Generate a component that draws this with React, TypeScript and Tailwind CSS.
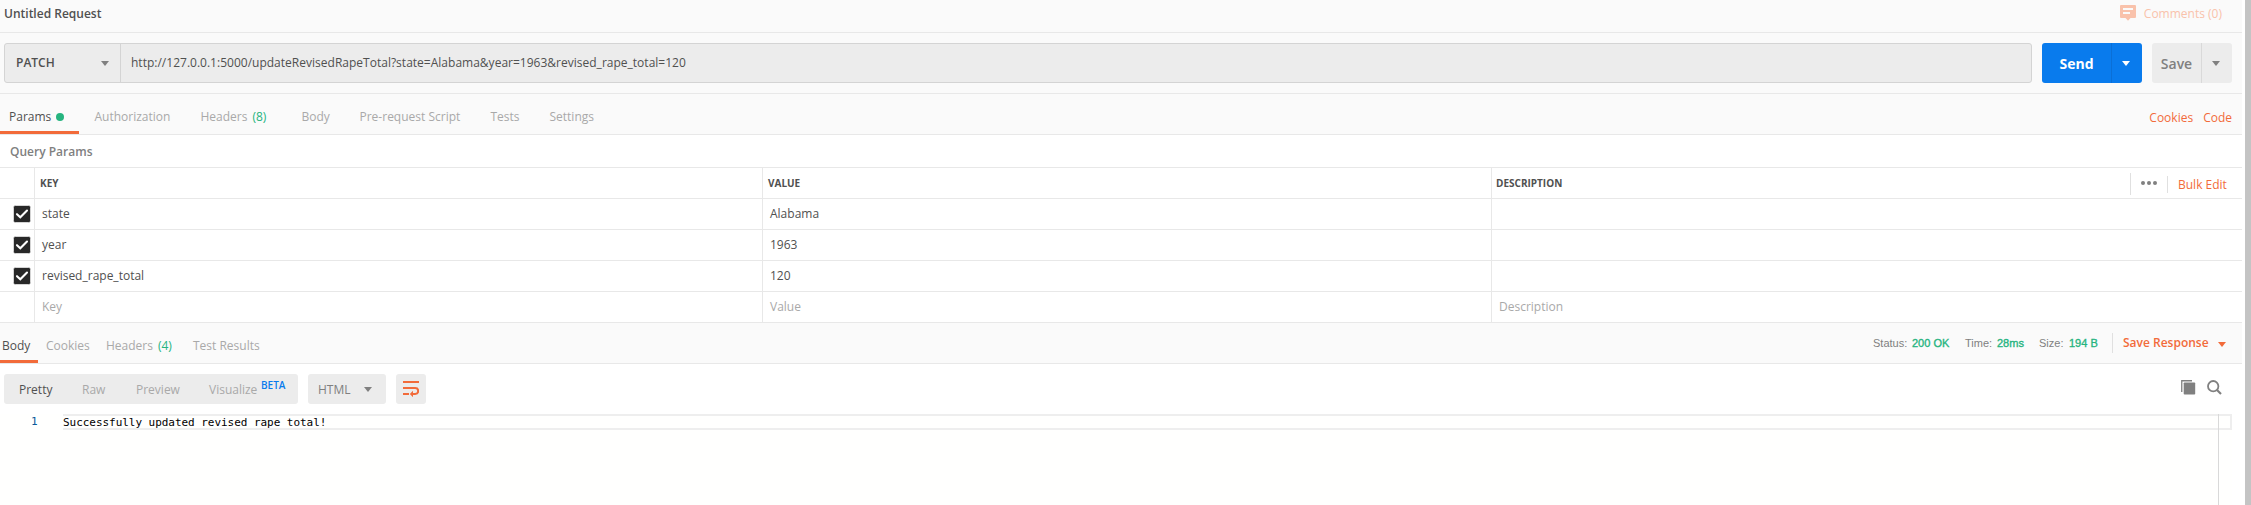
import React from "react";

const Caret = ({ className = "" }: { className?: string }) => (
  <svg width="8" height="5" viewBox="0 0 8 5" className={`shrink-0 ${className}`} fill="currentColor">
    <path d="M0 0H8L4 5Z" />
  </svg>
);

const Check = () => (
  <svg width="18" height="18" viewBox="0 0 18 18">
    <rect x="0.5" y="0.5" width="17" height="17" rx="2" fill="#282828" stroke="#d4d4d4" />
    <rect x="1" y="1" width="16" height="16" rx="1.5" fill="#282828" />
    <path d="M4 9.2L7.3 12.3L14 5.6" fill="none" stroke="#fff" strokeWidth="2.1" strokeLinecap="round" />
  </svg>
);

const requestTabs = [
  { label: "Authorization", width: "w-[106px]" },
  { label: "Headers", count: "(8)", width: "w-[101px]" },
  { label: "Body", width: "w-[58px]" },
  { label: "Pre-request Script", width: "w-[131px]" },
  { label: "Tests", width: "w-[59px]" },
  { label: "Settings", width: "w-[60px]" },
];

const params = [
  { key: "state", value: "Alabama" },
  { key: "year", value: "1963" },
  { key: "revised_rape_total", value: "120" },
];

const rowGrid = "grid grid-cols-[35px_728px_729px_1fr] border-b border-[#e8e8e8]";

export default function App() {
  return (
    <div className="flex h-[505px] w-[2251px] justify-between overflow-hidden whitespace-nowrap bg-white font-['Open_Sans',sans-serif] text-[12px] leading-4 text-[#505050]">
      <main className="flex w-[2242px] flex-col">
        <header className="flex h-[33px] items-start justify-between border-b border-[#e8e8e8] bg-[#fafafa] pl-1 pr-5 pt-[5px]">
          <h1 className="pt-px font-semibold">Untitled Request</h1>
          <div className="flex text-[#f9c2ab]">
            <svg width="16" height="16" viewBox="0 0 16 16" className="mr-2">
              <path d="M1 0H15Q16 0 16 1V12Q16 13 15 13H10.5L8 15.8L5.5 13H1Q0 13 0 12V1Q0 0 1 0Z" fill="currentColor" />
              <path d="M3 4H13M3 8H10" stroke="#fafafa" strokeWidth="2" />
            </svg>
            <span className="pt-px">Comments (0)</span>
          </div>
        </header>

        <section className="flex h-[61px] border-b border-[#e8e8e8] bg-[#fafafa] pl-1 pt-[10px]">
          <div className="flex h-10 w-[2028px] rounded-[3px] border border-[#d4d4d4] bg-[#ececec]">
            <div className="flex w-[116px] items-center justify-between border-r border-[#d4d4d4] px-[11px] font-semibold">
              <span>PATCH</span>
              <Caret className="text-[#808080]" />
            </div>
            <div className="flex items-center pl-[10px] tracking-[0.01px]">
              http://127.0.0.1:5000/updateRevisedRapeTotal?state=Alabama&amp;year=1963&amp;revised_rape_total=120
            </div>
          </div>
          <div className="ml-[10px] flex h-10 w-[100px] rounded-[3px] bg-[#097bed] text-white">
            <div className="flex w-[70px] items-center justify-center border-r border-[#0a6fd6] pt-px text-[14px] font-bold">Send</div>
            <div className="flex flex-1 items-center justify-center pr-[2px]">
              <Caret />
            </div>
          </div>
          <div className="ml-[10px] flex h-10 w-20 rounded-[3px] bg-[#ececec] text-[#808080]">
            <div className="flex w-[50px] items-center justify-center border-r border-[#d9d9d9] pt-px text-[14px] font-semibold">Save</div>
            <div className="flex flex-1 items-center justify-center pr-[2px]">
              <Caret />
            </div>
          </div>
        </section>

        <nav className="flex h-[41px] border-b border-[#e8e8e8] bg-[#fafafa] text-[#a9a9a9]">
          <div className="mr-[15.5px] h-10 w-[79px] border-b-[3px] border-[#f26b3a] pl-[9px] pt-[15px] text-[#505050]">
            <div className="flex h-4 items-center gap-[5px]">
              Params
              <span className="size-2 rounded-full bg-[#26b47f]" />
            </div>
          </div>
          {requestTabs.map((t) => (
            <div key={t.label} className={`${t.width} shrink-0 pt-[15px]`}>
              {t.label}
              {t.count && <span className="ml-[5px] text-[#26b47f]">{t.count}</span>}
            </div>
          ))}
          <div className="ml-auto flex gap-[10px] pr-[10px] pt-4 text-[#f26b3a]">
            <span>Cookies</span>
            <span>Code</span>
          </div>
        </nav>

        <div className="h-[33px] border-b border-[#e8e8e8] pl-[10px] pt-[9px] font-semibold text-[#808080]">Query Params</div>

        <section>
          <div className={`${rowGrid} h-[31px] text-[10px] font-bold`}>
            <div className="border-r border-[#e8e8e8]" />
            <div className="border-r border-[#e8e8e8] pl-[5px] pt-[7px]">KEY</div>
            <div className="border-r border-[#e8e8e8] pl-[5px] pt-[7px]">VALUE</div>
            <div className="flex items-start pl-[4px]">
              <span className="pt-[7px]">DESCRIPTION</span>
              <span className="ml-auto mt-[5px] h-[22px] w-px bg-[#e0e0e0]" />
              <svg width="16" height="4" viewBox="0 0 16 4" fill="#808080" className="ml-[10px] mt-[13px]">
                <circle cx="2" cy="2" r="2" />
                <circle cx="8" cy="2" r="2" />
                <circle cx="14" cy="2" r="2" />
              </svg>
              <span className="ml-[10px] mt-2 h-[17px] w-px bg-[#e0e0e0]" />
              <span className="ml-[10px] w-[64px] pt-[9px] text-[12px] font-normal text-[#f26b3a]">Bulk Edit</span>
            </div>
          </div>
          {params.map((p) => (
            <div key={p.key} className={`${rowGrid} h-[31px]`}>
              <div className="border-r border-[#e8e8e8] pl-[13px] pt-[6px]">
                <Check />
              </div>
              <div className="border-r border-[#e8e8e8] pl-[7px] pt-[7px]">{p.key}</div>
              <div className="border-r border-[#e8e8e8] pl-[7px] pt-[7px]">{p.value}</div>
              <div />
            </div>
          ))}
          <div className={`${rowGrid} h-[31px] text-[#a9a9a9]`}>
            <div className="border-r border-[#e8e8e8]" />
            <div className="border-r border-[#e8e8e8] pl-[7px] pt-[7px]">Key</div>
            <div className="border-r border-[#e8e8e8] pl-[7px] pt-[7px]">Value</div>
            <div className="pl-[7px] pt-[7px]">Description</div>
          </div>
        </section>

        <nav className="flex h-[41px] shrink-0 border-b border-[#e8e8e8] bg-[#fafafa] text-[#a9a9a9]">
          <div className="h-10 w-[38px] border-b-[3px] border-[#f26b3a] pl-0.5 pt-[15px] text-[#505050]">Body</div>
          <div className="ml-2 w-[60px] pt-[15px]">Cookies</div>
          <div className="w-[87px] pt-[15px]">
            Headers<span className="ml-[5px] text-[#26b47f]">(4)</span>
          </div>
          <div className="pt-[15px]">Test Results</div>
          <div className="ml-auto flex pt-3 font-['Liberation_Sans',sans-serif] text-[11px] text-[#808080]">
            <span className="w-[39px]">Status:</span>
            <span className="w-[53px] text-[#26b47f] [-webkit-text-stroke:0.35px]">200 OK</span>
            <span className="w-8">Time:</span>
            <span className="w-[42px] text-[#26b47f] [-webkit-text-stroke:0.35px]">28ms</span>
            <span className="w-[30px]">Size:</span>
            <span className="w-[43px] text-[#26b47f] [-webkit-text-stroke:0.35px]">194 B</span>
            <span className="-mt-[2px] h-5 w-px bg-[#e0e0e0]" />
            <span className="ml-[10px] w-[95px] font-['Open_Sans',sans-serif] text-[12px] font-semibold text-[#f26b3a]">Save Response</span>
            <Caret className="mr-[16px] mt-[7px] text-[#f26b3a]" />
          </div>
        </nav>

        <div className="flex h-[50px] shrink-0 pl-1 pt-[10px] text-[#a9a9a9]">
          <div className="flex h-[30px] w-[294px] rounded-[3px] bg-[#ececec] pl-[15px] pt-2">
            <span className="w-[63px] text-[#505050]">Pretty</span>
            <span className="w-[54px]">Raw</span>
            <span className="w-[73px]">Preview</span>
            <span className="w-[52px]">Visualize</span>
            <span className="-mt-[5px] text-[10px] font-semibold text-[#097bed]">BETA</span>
          </div>
          <div className="ml-[10px] flex h-[30px] w-[78px] items-center justify-between rounded-[3px] bg-[#ececec] pl-[10px] pr-[14px] text-[#808080]">
            <span className="pt-px">HTML</span>
            <Caret />
          </div>
          <div className="ml-[10px] flex size-[30px] items-center justify-center rounded-[3px] bg-[#ececec]">
            <svg width="16" height="16" viewBox="0 0 16 16" fill="none" stroke="#f26b3a" strokeWidth="2">
              <path d="M0 1H16M0 7H12.2A2.9 2.9 0 0 1 12.2 13H9M0 13H6" />
              <path d="M10 9.8V16.2L6.8 13Z" fill="#f26b3a" stroke="none" />
            </svg>
          </div>
          <div className="ml-auto flex items-start pr-[20px] pt-[6px]">
            <svg width="15" height="15" viewBox="0 0 15 15" className="mr-[11px]">
              <path d="M0.75 12V0.75H11" fill="none" stroke="#808080" strokeWidth="1.3" />
              <rect x="2.7" y="2.5" width="11.5" height="12" rx="0.8" fill="#808080" />
            </svg>
            <svg width="15" height="15" viewBox="0 0 15 15" fill="none" stroke="#808080">
              <circle cx="6.2" cy="6.2" r="5.2" strokeWidth="1.8" />
              <path d="M10 10L14 14" strokeWidth="2.2" />
            </svg>
          </div>
        </div>

        <div className="mr-[10px] flex flex-1 bg-[#fffffe] font-['DejaVu_Sans_Mono',monospace] text-[11px]">
          <div className="w-[63px] pl-[31px] text-[#0b5a9a]">1</div>
          <div className="relative flex-1">
            <div className="h-4 border-2 border-l-0 border-[#eeeeee] leading-[13px] tracking-[-0.04px] text-black">Successfully updated revised rape total!</div>
            <div className="absolute inset-y-0 right-[13px] w-px bg-[#d9d9d9]" />
          </div>
        </div>
      </main>
      <div className="w-[6px] bg-[#c4c4c4]" />
    </div>
  );
}
